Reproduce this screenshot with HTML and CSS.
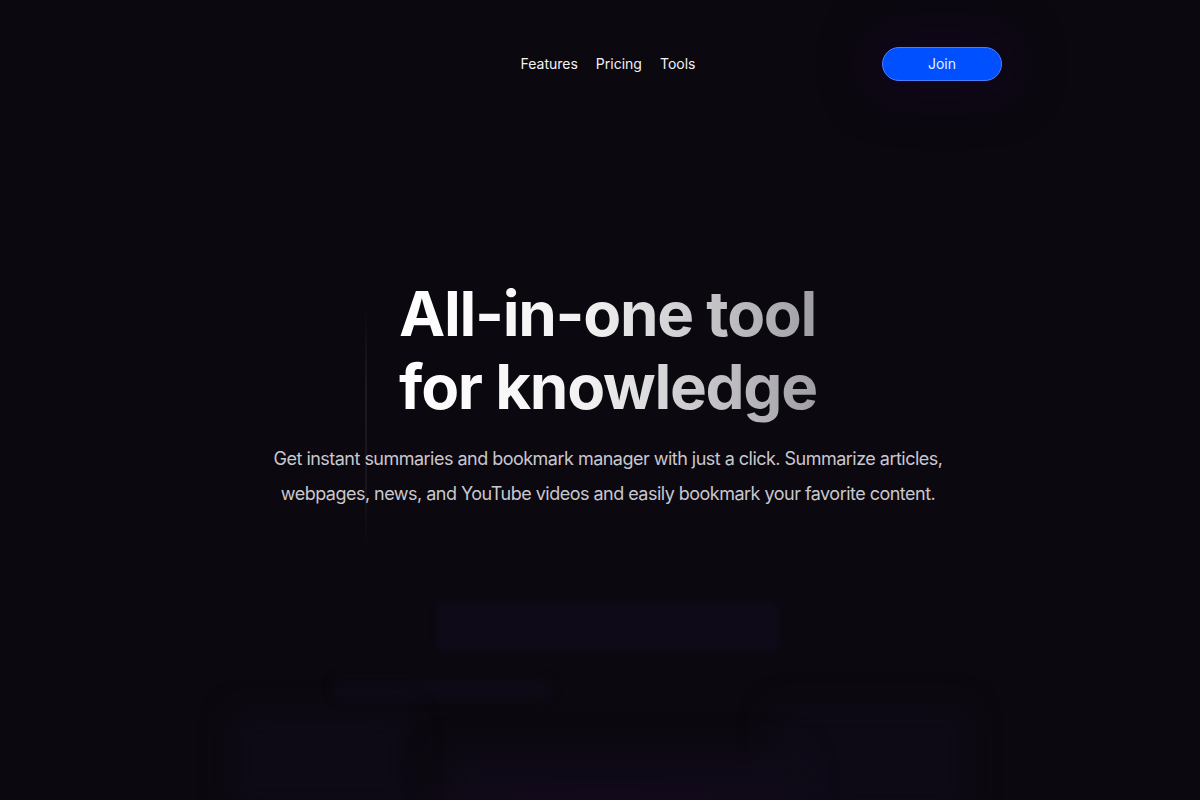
FILE: index.html
```html
<!DOCTYPE html>
<html lang="en">
<head>
<meta charset="utf-8">
<title>All-in-one tool for knowledge</title>
<link rel="stylesheet" href="styles.css">
</head>
<body>
<div class="page">
  <header class="nav">
    <div class="nav-side"></div>
    <nav class="links">
      <a href="#">Features</a>
      <a href="#">Pricing</a>
      <a href="#">Tools</a>
    </nav>
    <div class="nav-side right">
      <a class="join" href="#">Join</a>
    </div>
  </header>
  <main class="hero">
    <div class="vline"></div>
    <h1 class="title">All-in-one tool<br>for knowledge</h1>
    <p class="lead">Get instant summaries and bookmark manager with just a click. Summarize articles,<br>webpages, news, and YouTube videos and easily bookmark your favorite content.</p>
    <div class="ghosts">
      <div class="ghost g1"></div>
      <div class="ghost g2"></div>
      <div class="ghost g3"></div>
      <div class="ghost g4"></div>
      <div class="ghost g5"></div>
      <div class="glow"></div>
    </div>
  </main>
</div>
</body>
</html>
```
FILE: styles.css
```css
* { box-sizing: border-box; }
html, body { margin: 0; padding: 0; }
body {
  background: #0b080f;
  color: #fff;
  font-family: Inter, "Noto Sans", sans-serif;
  width: 1200px;
  height: 800px;
  overflow: hidden;
}
.page { position: relative; height: 800px; overflow: hidden; }
.nav {
  display: grid;
  grid-template-columns: 1fr auto 1fr;
  align-items: center;
  height: 127px;
  padding: 0 198px 0 214px;
}
.nav-side { height: 34px; display: flex; }
.nav-side.right { justify-content: flex-end; }
.links { display: flex; gap: 18px; }
.links a {
  color: #f2f2f5;
  text-decoration: none;
  font-size: 14px;
}
.join {
  display: flex;
  align-items: center;
  justify-content: center;
  width: 120px;
  height: 34px;
  border-radius: 17px;
  background: #0050ff;
  border: 1px solid #4a7dff;
  color: #e8eeff;
  font-size: 14px;
  text-decoration: none;
  box-shadow: 0 0 40px 20px rgba(20, 6, 34, 0.6);
}
.hero {
  position: relative;
  display: flex;
  flex-direction: column;
  align-items: center;
  padding-top: 150px;
  padding-left: 16px;
}
.vline {
  position: absolute;
  left: 365px;
  top: 178px;
  width: 2px;
  height: 242px;
  background: linear-gradient(180deg, rgba(255,255,255,0), rgba(255,255,255,0.07) 35%, rgba(255,255,255,0.05) 75%, rgba(255,255,255,0));
}
.title {
  margin: 0;
  font-size: 62px;
  font-weight: 700;
  line-height: 73px;
  letter-spacing: -1.3px;
  text-align: left;
  background: linear-gradient(90deg, #ffffff 0%, #f2f2f2 45%, #9e9ea4 100%);
  -webkit-background-clip: text;
  background-clip: text;
  color: transparent;
}
.lead {
  margin: 18px 0 0;
  font-size: 18px;
  line-height: 35px;
  color: #c9c7cd;
  text-align: center;
  font-weight: 400;
  letter-spacing: -0.52px;
}
.ghosts {
  position: relative;
  width: 1200px;
  height: 290px;
  margin-left: -16px;
}
.ghost { position: absolute; border-radius: 10px; background: #0e0a18; }
.g1 { left: 435px; top: 91px; width: 345px; height: 50px; filter: blur(2px); }
.g2 { left: 332px; top: 166px; width: 220px; height: 24px; background: #0d0a15; filter: blur(4px); }
.g3 { left: 230px; top: 200px; width: 180px; height: 100px; background: #0d0a16; filter: blur(14px); }
.g4 { left: 770px; top: 195px; width: 200px; height: 110px; background: #0d0a16; filter: blur(14px); }
.g5 { left: 440px; top: 240px; width: 360px; height: 60px; background: #0f0a17; filter: blur(16px); }
.glow {
  position: absolute;
  left: 300px;
  top: 260px;
  width: 620px;
  height: 120px;
  border-radius: 50%;
  background: radial-gradient(ellipse at center, rgba(40, 10, 50, 0.45), rgba(20, 8, 40, 0) 70%);
}
```
